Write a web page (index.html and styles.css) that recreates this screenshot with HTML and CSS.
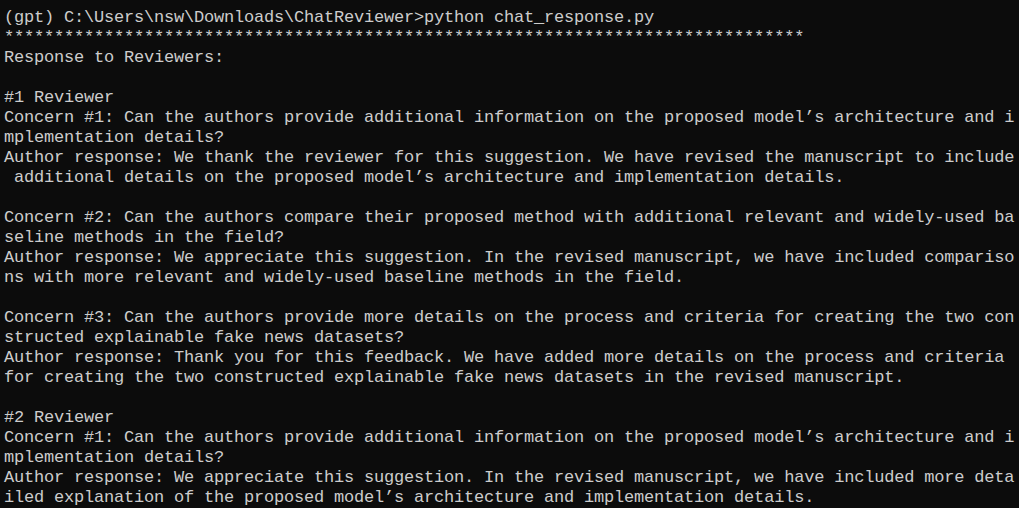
FILE: index.html
```html
<!DOCTYPE html>
<html lang="en">
<head>
<meta charset="utf-8">
<title>Command Prompt</title>
<link rel="stylesheet" href="styles.css">
</head>
<body>
<pre class="console">(gpt) C:\Users\nsw\Downloads\ChatReviewer&gt;python chat_response.py
********************************************************************************
Response to Reviewers:

#1 Reviewer
Concern #1: Can the authors provide additional information on the proposed model’s architecture and i
mplementation details?
Author response: We thank the reviewer for this suggestion. We have revised the manuscript to include
 additional details on the proposed model’s architecture and implementation details.

Concern #2: Can the authors compare their proposed method with additional relevant and widely-used ba
seline methods in the field?
Author response: We appreciate this suggestion. In the revised manuscript, we have included compariso
ns with more relevant and widely-used baseline methods in the field.

Concern #3: Can the authors provide more details on the process and criteria for creating the two con
structed explainable fake news datasets?
Author response: Thank you for this feedback. We have added more details on the process and criteria
for creating the two constructed explainable fake news datasets in the revised manuscript.

#2 Reviewer
Concern #1: Can the authors provide additional information on the proposed model’s architecture and i
mplementation details?
Author response: We appreciate this suggestion. In the revised manuscript, we have included more deta
iled explanation of the proposed model’s architecture and implementation details.</pre>
</body>
</html>
```

FILE: styles.css
```css
html, body {
  margin: 0;
  padding: 0;
  height: 100%;
  background: #0c0c0c;
  overflow: hidden;
}

body {
  padding: 8px 0 0 4px;
  box-sizing: border-box;
}

.console {
  margin: 0;
  font-family: "Liberation Mono", "DejaVu Sans Mono", monospace;
  font-size: 17px;
  letter-spacing: -0.2px;
  line-height: 20px;
  color: #cccccc;
  white-space: pre;
}
```
